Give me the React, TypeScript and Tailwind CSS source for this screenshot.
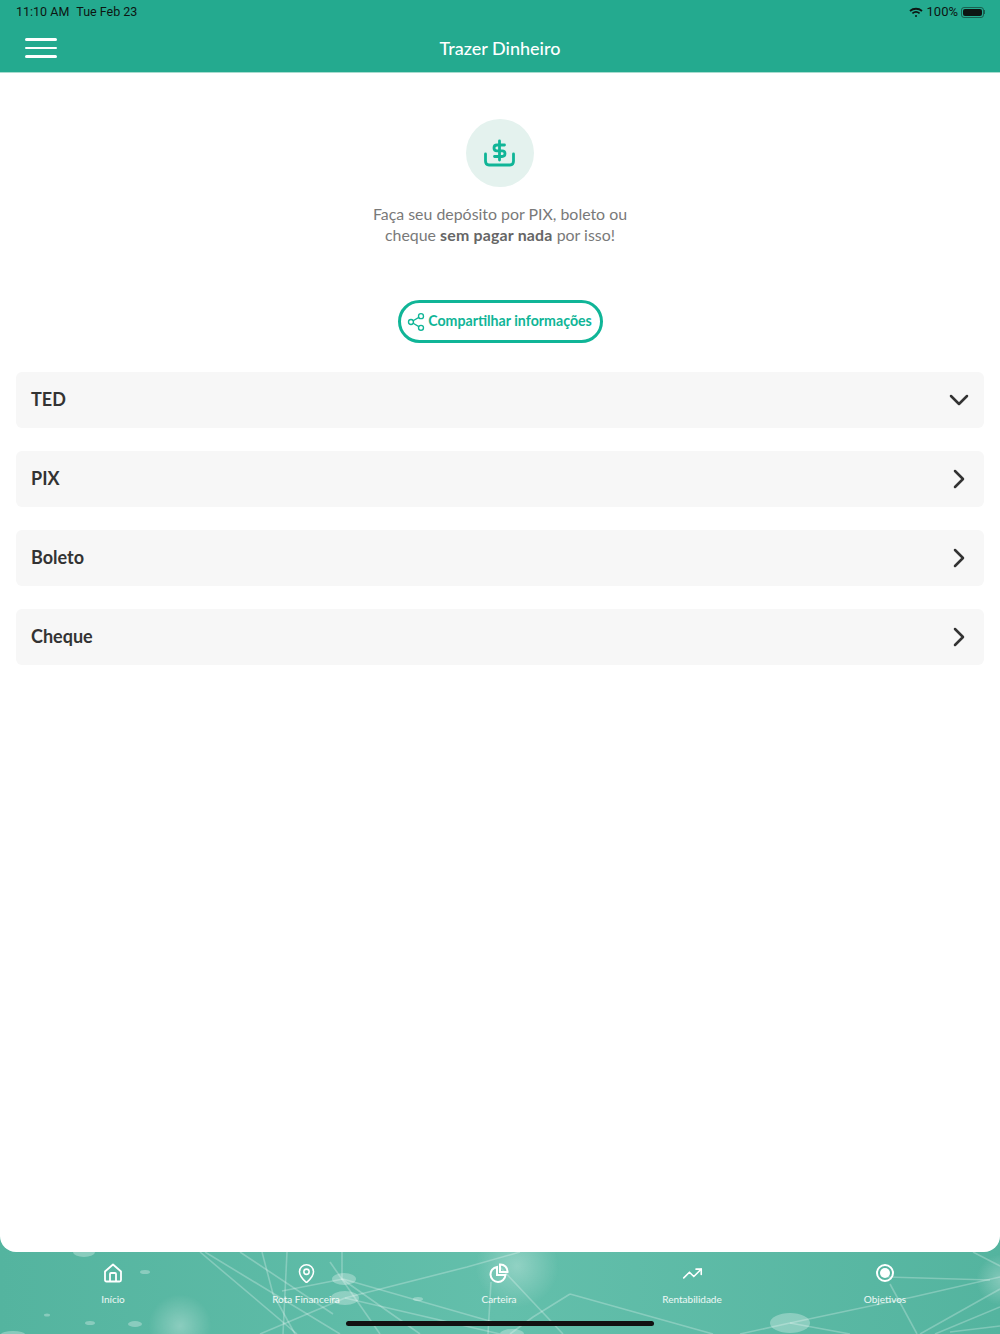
import { ChevronDown, ChevronRight, Share2, MapPin, TrendingUp } from 'lucide-react';

const methods = [
  { label: 'TED', open: true },
  { label: 'PIX', open: false },
  { label: 'Boleto', open: false },
  { label: 'Cheque', open: false },
];

function NetworkBackground() {
  const lines = [
    'M200 0 L297 82', 'M205 0 L340 82', 'M240 0 L333 62', 'M262 0 L273 42 L295 82', 'M287 0 L283 82',
    'M342 0 L342 27 L420 82', 'M343 27 L500 72', 'M345 46 L500 82', 'M345 46 L260 82', 'M282 39 L343 27',
    'M345 46 L467 15 L520 0', 'M330 10 L380 82',
    'M570 42 L533 65 L510 82', 'M570 42 L713 82', 'M500 15 L563 82', 'M491 30 L488 82',
    'M790 71 L913 45 L1000 25', 'M887 25 L990 28', 'M890 32 L917 82', 'M920 82 L1000 37',
    'M935 82 L1000 55', 'M973 0 L1000 14', 'M790 71 L850 82', 'M790 71 L740 82', 'M950 80 L1000 74',
  ];
  return (
    <svg className="absolute inset-0 h-full w-full blur-[0.4px]" viewBox="0 0 1000 82" preserveAspectRatio="none">
      <defs>
        <radialGradient id="glow">
          <stop offset="0%" stopColor="#fff" stopOpacity="0.3" />
          <stop offset="100%" stopColor="#fff" stopOpacity="0" />
        </radialGradient>
      </defs>
      <circle cx="517" cy="14" r="42" fill="url(#glow)" />
      <circle cx="180" cy="74" r="32" fill="url(#glow)" />
      <circle cx="1002" cy="28" r="26" fill="url(#glow)" />
      <g stroke="#fff" strokeOpacity="0.26" strokeWidth="1.6" fill="none">
        {lines.map((d) => (
          <path key={d} d={d} />
        ))}
      </g>
      <g fill="#fff" fillOpacity="0.3">
        <ellipse cx="344" cy="27" rx="12" ry="6" />
        <ellipse cx="345" cy="46" rx="14" ry="7" />
        <ellipse cx="790" cy="71" rx="20" ry="10" />
        <ellipse cx="145" cy="20" rx="5" ry="2" />
        <ellipse cx="84" cy="0" rx="11" ry="5" />
        <ellipse cx="90" cy="71" rx="5" ry="2" />
        <ellipse cx="135" cy="72" rx="7" ry="3" />
        <ellipse cx="47" cy="63" rx="3" ry="1.5" />
        <ellipse cx="418" cy="47" rx="5" ry="2" />
        <ellipse cx="13" cy="82" rx="12" ry="3" />
        <ellipse cx="512" cy="82" rx="12" ry="5" />
      </g>
    </svg>
  );
}

function TabItem({ label, icon }: { label: string; icon: React.ReactNode }) {
  return (
    <div className="flex w-[193px] flex-col items-center">
      <div className="flex h-[26px] items-center justify-center">{icon}</div>
      <span className="mt-[6px] text-[10px] leading-[14px] text-white/90">{label}</span>
    </div>
  );
}

export default function App() {
  return (
    <div className="flex h-[1334px] flex-col bg-linear-to-r from-[#54b49f] via-[#63bfab] to-[#54b49f] font-['Lato','Noto_Sans',sans-serif]">
      <header className="bg-[#24aa8f]">
        <div className="flex h-6 items-center justify-between pl-4 pr-[15px] text-[#0d1512]">
          <div className="flex gap-[7px] font-['Roboto',sans-serif] text-[12.5px]">
            <span>11:10 AM</span>
            <span>Tue Feb 23</span>
          </div>
          <div className="flex items-center gap-[4px] font-['Roboto',sans-serif] text-[13px]">
            <svg width="14" height="11" viewBox="0 0 14 11" fill="none" stroke="#0d1512" strokeWidth="1.8">
              <path d="M1 4 C4.5 1 9.5 1 13 4" />
              <path d="M3.4 6.4 C5.5 4.7 8.5 4.7 10.6 6.4" />
              <circle cx="7" cy="9" r="1" fill="#0d1512" stroke="none" />
            </svg>
            <span>100%</span>
            <div className="ml-[-1px] flex items-center">
              <div className="h-[11px] w-[23px] rounded-[3px] border border-[#0d1512]/50 p-[1px]">
                <div className="h-full w-full rounded-[2px] bg-[#0d1512]" />
              </div>
              <div className="h-[4px] w-[1px] bg-[#0d1512]/50" />
            </div>
          </div>
        </div>
        <div className="relative flex h-[48px] items-center justify-center">
          <div className="absolute left-[25px] top-[14px] flex w-[32px] flex-col gap-[6px]">
            <div className="h-[2.5px] rounded-full bg-white" />
            <div className="h-[2.5px] rounded-full bg-white" />
            <div className="h-[2.5px] rounded-full bg-white" />
          </div>
          <h1 className="text-[18px] font-medium leading-[26px] text-white">Trazer Dinheiro</h1>
        </div>
      </header>

      <main className="flex-1 rounded-b-[16px] border-t border-[#a8dccf] bg-white px-4">
        <div className="flex flex-col items-center pt-[46px]">
          <div className="flex h-[68px] w-[68px] items-center justify-center rounded-full bg-[#e4f2ee]">
            <svg width="32" height="28" viewBox="0 0 32 28" fill="none" stroke="#10b597" strokeWidth="2.8" strokeLinecap="round">
              <path d="M1.5 15 V22 C1.5 25 3 26 5 26 H26 C28 26 29.5 25 29.5 22 V15" />
              <path d="M15.5 2 V21" />
              <path d="M20.5 6 H13 C11 6 10 7.3 10 9 C10 10.7 11 11.8 13 11.8 H18 C20 11.8 21 13 21 14.6 C21 16.2 20 17.5 18 17.5 H10.5" />
            </svg>
          </div>
          <p className="mt-[16px] text-center text-[15.9px] leading-[21px] text-[#797979]">
            Faça seu depósito por PIX, boleto ou
            <br />
            cheque <strong className="font-bold tracking-[0.2px] text-[#666]">sem pagar nada</strong> por isso!
          </p>
          <button className="mt-[55px] flex h-[43px] w-[205px] items-center justify-center gap-[2px] rounded-full border-[3px] border-[#10b597] pr-[2px] text-[14.2px] font-bold text-[#10b597]">
            <Share2 size={20} strokeWidth={1.6} />
            <span className="mb-[1px]">Compartilhar informações</span>
          </button>
        </div>
        <div className="mt-[29px] flex flex-col gap-[23px]">
          {methods.map((m) => (
            <div key={m.label} className="flex h-[56px] items-center justify-between rounded-[6px] bg-[#f7f7f7] pl-[15px] pr-[9px]">
              <span className="mb-[2px] text-[18px] font-bold text-[#333]">{m.label}</span>
              {m.open ? (
                <ChevronDown size={32} strokeWidth={1.9} className="text-[#333]" />
              ) : (
                <ChevronRight size={32} strokeWidth={1.9} className="text-[#333]" />
              )}
            </div>
          ))}
        </div>
      </main>

      <footer className="relative h-[82px]">
        <NetworkBackground />
        <div className="relative flex justify-center pr-[2px] pt-[8px]">
          <TabItem
            label="Início"
            icon={
              <svg width="20" height="20" viewBox="0 0 20 20" fill="none" stroke="#fff" strokeWidth="1.8" strokeLinejoin="round">
                <path d="M2 8.5 L10 1.5 L18 8.5 V17 C18 18 17.5 18.5 16.5 18.5 H3.5 C2.5 18.5 2 18 2 17 Z" />
                <path d="M7 18.5 V11 C7 10.3 7.3 10 8 10 H12 C12.7 10 13 10.3 13 11 V18.5" />
              </svg>
            }
          />
          <TabItem label="Rota Financeira" icon={<MapPin size={21} strokeWidth={1.8} className="text-white" />} />
          <TabItem
            label="Carteira"
            icon={
              <svg width="20" height="20" viewBox="0 0 20 20" fill="none" stroke="#fff" strokeWidth="2">
                <path d="M8 4 A7.5 7.5 0 1 0 16.5 12 H8 Z" />
                <path d="M11 1.5 A7 7 0 0 1 18.5 9 H11 Z" />
              </svg>
            }
          />
          <TabItem label="Rentabilidade" icon={<TrendingUp size={21} strokeWidth={1.8} className="text-white" />} />
          <TabItem
            label="Objetivos"
            icon={
              <div className="flex h-[18px] w-[18px] items-center justify-center rounded-full border-2 border-white">
                <div className="h-[10px] w-[10px] rounded-full bg-white" />
              </div>
            }
          />
        </div>
        <div className="absolute bottom-[8px] left-[346px] h-[5px] w-[308px] rounded-full bg-[#111]" />
      </footer>
    </div>
  );
}
